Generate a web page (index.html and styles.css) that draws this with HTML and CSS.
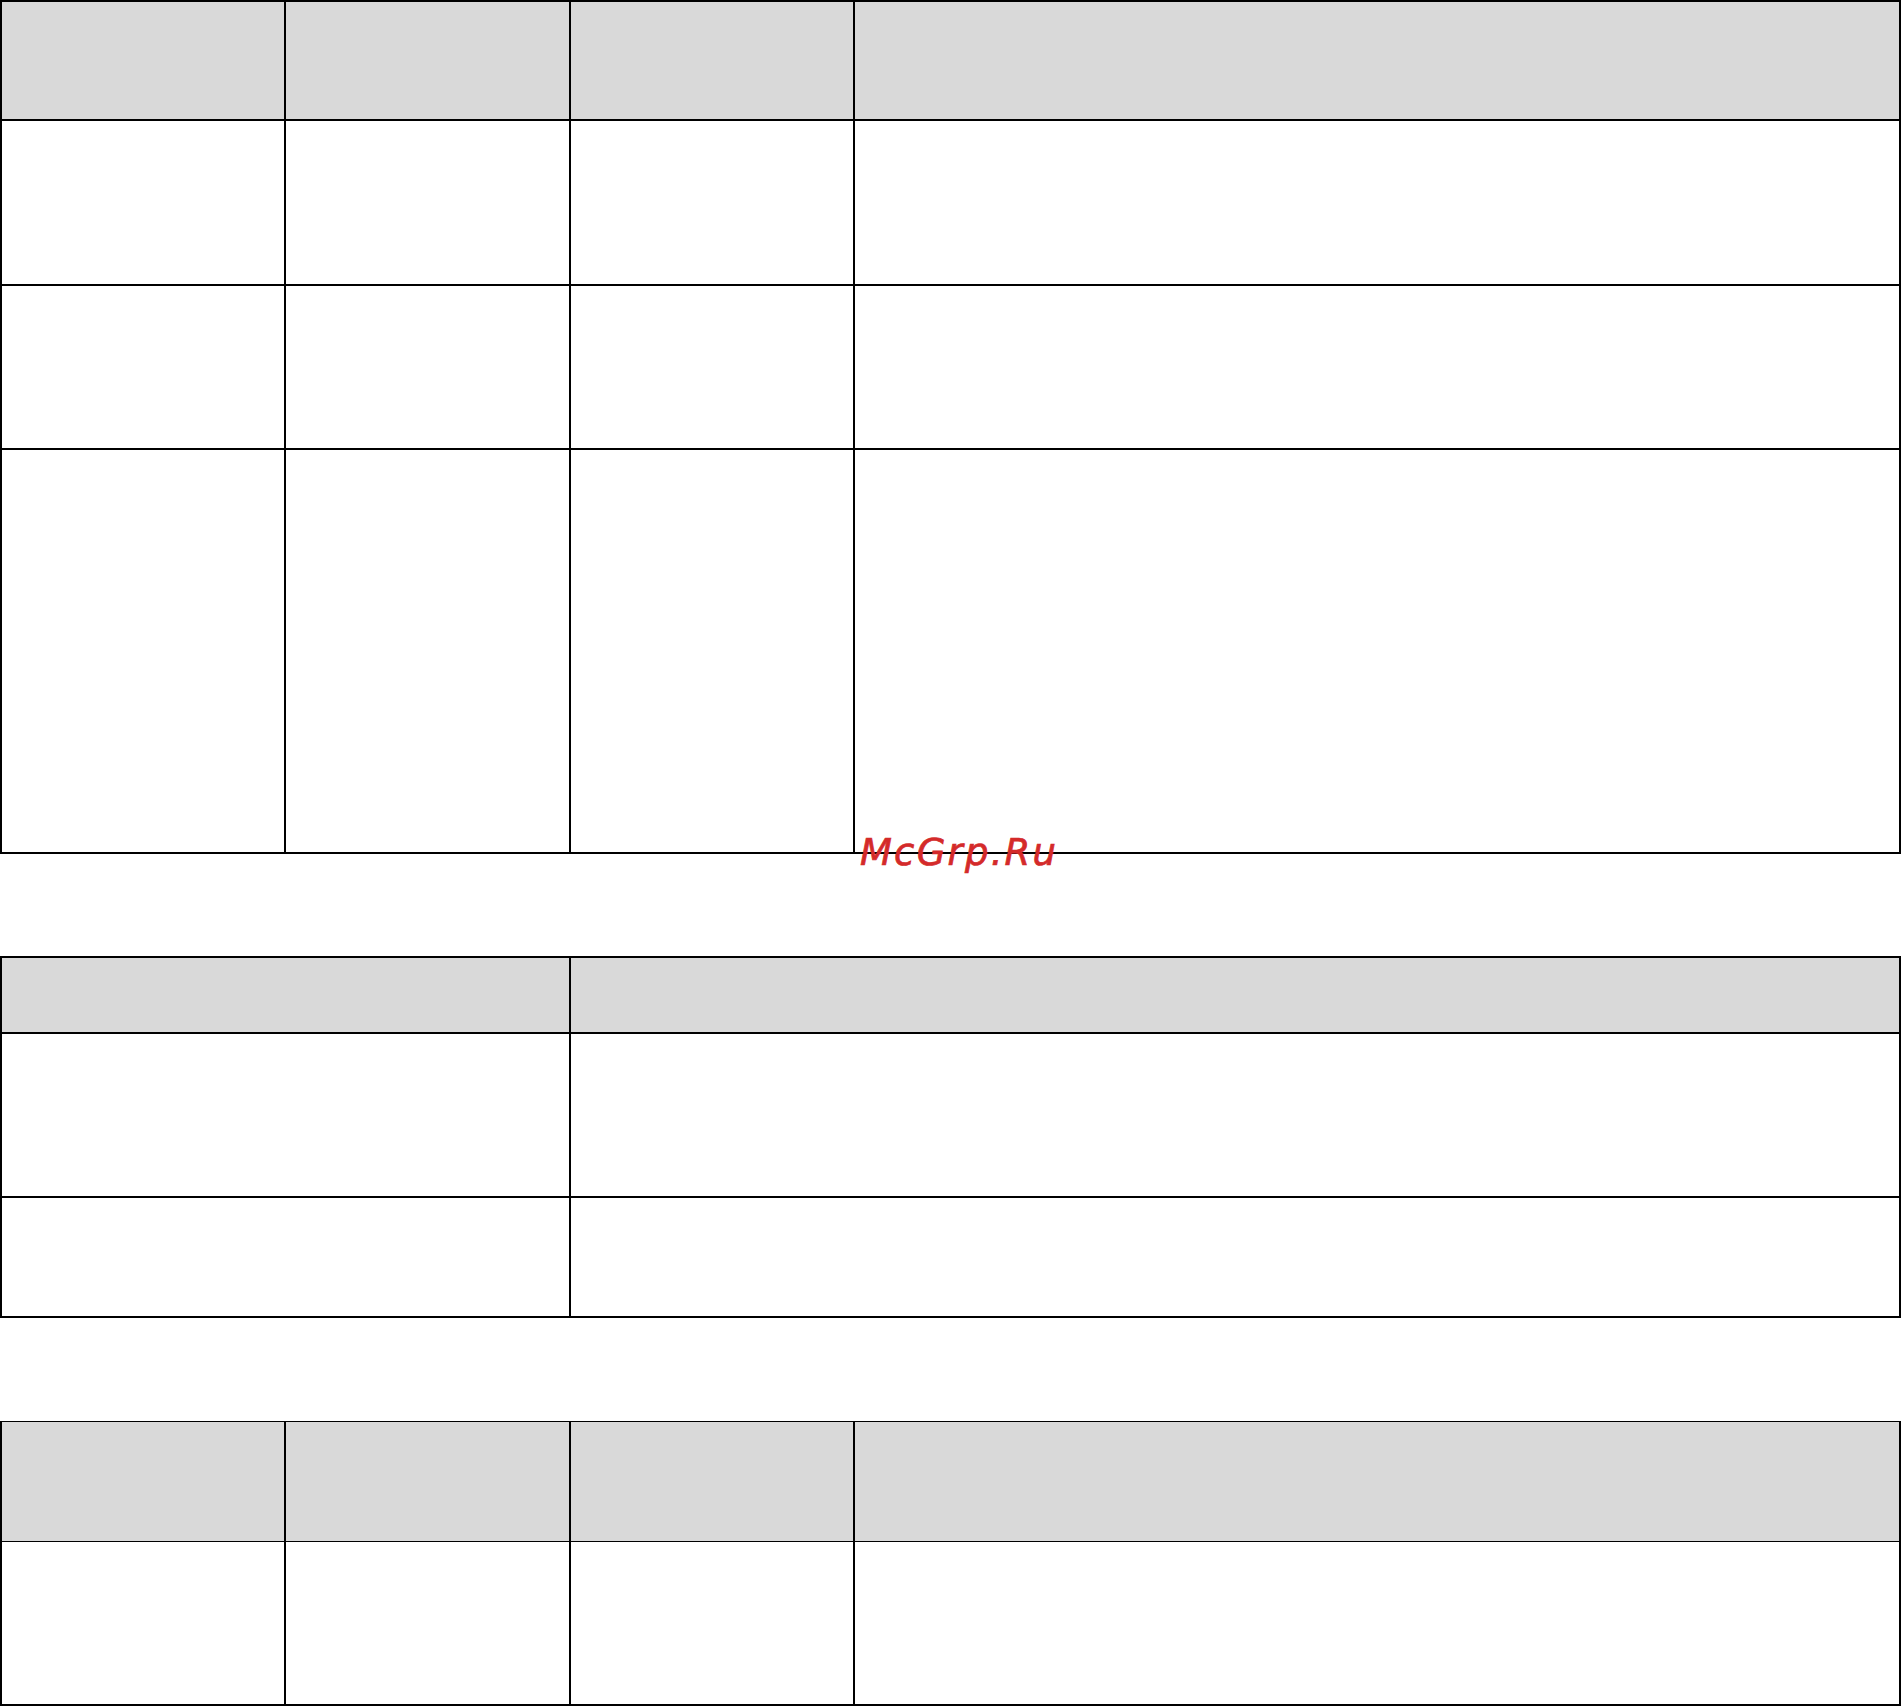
FILE: index.html
```html
<!DOCTYPE html>
<html lang="ru">
<head>
<meta charset="utf-8">
<title>Таблицы</title>
<link rel="stylesheet" href="styles.css">
</head>
<body>
<div class="page">
  <div class="grid grid-four t1">
    <div class="cell head"></div><div class="cell head"></div><div class="cell head"></div><div class="cell head"></div>
    <div class="cell r1"></div><div class="cell r1"></div><div class="cell r1"></div><div class="cell r1"></div>
    <div class="cell r2"></div><div class="cell r2"></div><div class="cell r2"></div><div class="cell r2"></div>
    <div class="cell r3"></div><div class="cell r3"></div><div class="cell r3"></div><div class="cell r3"></div>
  </div>

  <div class="grid grid-two t2">
    <div class="cell head"></div><div class="cell head"></div>
    <div class="cell r1"></div><div class="cell r1"></div>
    <div class="cell r2"></div><div class="cell r2"></div>
  </div>

  <div class="grid grid-four t3">
    <div class="cell head"></div><div class="cell head"></div><div class="cell head"></div><div class="cell head"></div>
    <div class="cell r1"></div><div class="cell r1"></div><div class="cell r1"></div><div class="cell r1"></div>
  </div>

  <div class="watermark">McGrp.Ru</div>
</div>
</body>
</html>
```

FILE: styles.css
```css
html, body {
  margin: 0;
  padding: 0;
  background: #ffffff;
}

.page {
  position: relative;
  width: 1903px;
  font-family: "DejaVu Sans", sans-serif;
}

.grid {
  display: grid;
  width: 1901px;
  box-sizing: border-box;
  border-left: 2px solid #000;
  border-top: 2px solid #000;
}

.grid-four {
  grid-template-columns: 284px 285px 284px 1046px;
}

.grid-two {
  grid-template-columns: 569px 1330px;
}

.cell {
  box-sizing: border-box;
  border-right: 2px solid #000;
  border-bottom: 2px solid #000;
  background: #ffffff;
}

.cell.head {
  background: #d9d9d9;
}

/* table 1 */
.t1 .head { height: 119px; }
.t1 .r1 { height: 165px; }
.t1 .r2 { height: 164px; }
.t1 .r3 { height: 404px; }

/* table 2 */
.t2 {
  margin-top: 102px;
}
.t2 .head { height: 76px; }
.t2 .r1 { height: 164px; }
.t2 .r2 { height: 120px; }

/* table 3 */
.t3 {
  margin-top: 103px;
  border-top-width: 1px;
}
.t3 .head {
  height: 120px;
  border-bottom-width: 1px;
}
.t3 .r1 { height: 164px; }

.watermark {
  position: absolute;
  left: 860px;
  top: 834px;
  font-family: "DejaVu Sans", sans-serif;
  font-style: italic;
  font-size: 37px;
  line-height: 1;
  letter-spacing: 2.2px;
  color: #d42a2a;
  -webkit-text-stroke: 0.7px #d42a2a;
  white-space: nowrap;
}
```
